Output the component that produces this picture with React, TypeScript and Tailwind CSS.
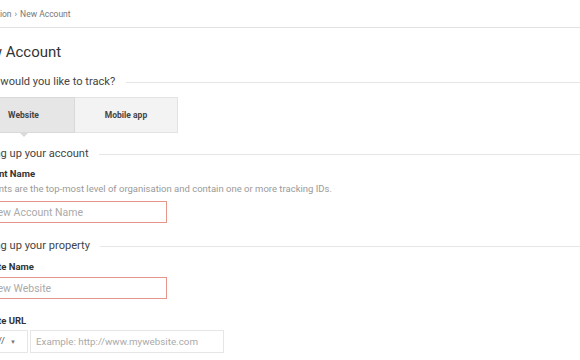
export default function App() {
  return (
    <div className="h-[360px] w-[580px] overflow-hidden bg-white font-['Roboto',sans-serif] text-[#333]">
      {/* breadcrumb */}
      <div className="flex h-[28px] items-center border-b border-[#e2e2e2] pt-[1px] whitespace-nowrap text-[8.5px] text-[#777]">
        <div className="ml-[-44px] flex items-center gap-[3px]">
          <span>Administration</span>
          <span>›</span>
          <span>New Account</span>
        </div>
      </div>

      <div className="ml-[-28px] flex flex-col whitespace-nowrap">
        <h1 className="mt-[16px] text-[15px] leading-[16px] font-normal text-[#333]">New Account</h1>

        {/* track */}
        <div className="mt-[15px] flex h-[14px] items-center gap-[11px]">
          <span className="text-[11.1px] text-[#444]">What would you like to track?</span>
          <div className="flex-1 border-t border-[#e6e6e6]" />
        </div>

        <div className="mt-[8px] flex">
          <div className="relative flex h-[36px] w-[103px] items-center justify-center border border-[#d9d9d9] bg-[#e6e6e6] text-[8.5px] font-bold text-[#444]">
            Website
            <div className="absolute left-1/2 top-full h-0 w-0 -translate-x-1/2 border-x-[5px] border-t-[5px] border-x-transparent border-t-[#d9d9d9]" />
          </div>
          <div className="flex h-[36px] w-[103px] items-center justify-center border border-l-0 border-[#e3e3e3] bg-[#f3f3f3] text-[8.5px] font-bold text-[#444]">
            Mobile app
          </div>
        </div>

        {/* account */}
        <div className="mt-[14px] flex h-[14px] items-center gap-[10px]">
          <span className="text-[11.1px] text-[#444]">Setting up your account</span>
          <div className="flex-1 border-t border-[#e6e6e6]" />
        </div>
        <div className="mt-[7px] text-[9.5px] leading-[12px] font-bold text-[#333]">Account Name</div>
        <div className="mt-[3px] text-[9.5px] leading-[12px] text-[#9a9a9a]">
          Accounts are the top-most level of organisation and contain one or more tracking IDs.
        </div>
        <input
          placeholder="New Account Name"
          className="mt-[6px] h-[22px] w-[195px] border border-[#e8958c] bg-white pl-[17px] pr-[6px] text-[10.5px] outline-none placeholder:text-[#aaa]"
        />

        {/* property */}
        <div className="mt-[16px] flex h-[14px] items-center gap-[10px]">
          <span className="text-[11.1px] text-[#444]">Setting up your property</span>
          <div className="flex-1 border-t border-[#e6e6e6]" />
        </div>
        <div className="mt-[8px] text-[9.5px] leading-[12px] font-bold text-[#333]">Website Name</div>
        <input
          placeholder="New Website"
          className="mt-[4px] h-[22px] w-[195px] border border-[#e8958c] bg-white pl-[17px] pr-[6px] text-[10.5px] outline-none placeholder:text-[#aaa]"
        />
        <div className="mt-[16px] text-[9.5px] leading-[12px] font-bold text-[#333]">Website URL</div>
        <div className="mt-[3px] flex h-[23px]">
          <div className="flex w-[56px] items-center gap-[5px] border border-[#e6e6e6] bg-white pl-[6px] text-[9.5px] text-[#555]">
            <span>http://</span>
            <span className="text-[6px] text-[#777]">▼</span>
          </div>
          <input
            placeholder="Example: http://www.mywebsite.com"
            className="ml-[2px] h-[23px] w-[194px] border border-[#e6e6e6] bg-white px-[5px] text-[9.8px] outline-none placeholder:text-[#aaa]"
          />
        </div>
      </div>
    </div>
  );
}
